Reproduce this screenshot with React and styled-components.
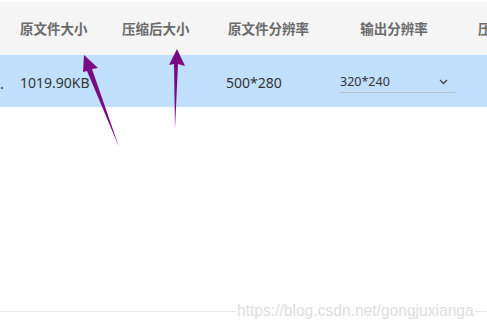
import React from "react";
import styled, { createGlobalStyle } from "styled-components";

const Global = createGlobalStyle`
  html, body { margin: 0; padding: 0; background: #fff; }
  body { width: 487px; height: 329px; overflow: hidden; }
  #root { height: 100%; }
`;

const Page = styled.div`
  position: relative;
  height: 329px;
  display: flex;
  flex-direction: column;
  padding-top: 2px;
  box-sizing: border-box;
  font-family: "Noto Sans", "Noto Sans CJK SC", sans-serif;
`;

const Grid = styled.div`
  display: grid;
  grid-template-columns: 20px 82px 106px 112px 148px 1fr;
  height: ${(p) => p.$h}px;
  background: ${(p) => p.$bg};
  align-items: center;
  white-space: nowrap;
  overflow: hidden;
`;

const HeadCell = styled.div`
  font-family: "Noto Sans CJK SC", sans-serif;
  font-size: 13.5px;
  font-weight: 700;
  color: #6a6a6a;
  text-align: ${(p) => (p.$center ? "center" : "left")};
  padding-left: ${(p) => p.$pl || 0}px;
  margin-top: -1px;
`;

const Cell = styled.div`
  font-family: "Noto Sans", "Noto Sans CJK SC", sans-serif;
  font-size: 14px;
  color: #333;
  padding-left: ${(p) => p.$pl || 0}px;
  margin-top: ${(p) => p.$mt ?? 3}px;
`;

const Select = styled.div`
  margin-left: 20px;
  width: 115px;
  height: 22px;
  box-sizing: border-box;
  border-bottom: 1px solid #b8c4ce;
  display: flex;
  align-items: center;
  justify-content: space-between;
  font-size: 12.5px;
  color: #333;
  margin-top: 2px;
`;

const Footer = styled.div`
  margin-top: auto;
  margin-bottom: 9px;
  display: flex;
  align-items: center;
  gap: 1px;
`;

const Rule = styled.div`
  height: 1px;
  background: #e6e6e6;
  flex: ${(p) => (p.$grow ? 1 : "none")};
  width: ${(p) => p.$w || 0}px;
`;

const Mark = styled.span`
  font-family: "Liberation Sans", Arial, sans-serif;
  font-size: 15.6px;
  color: #dedede;
`;

const Overlay = styled.svg`
  position: absolute;
  left: 0;
  top: 0;
  pointer-events: none;
`;

export default function App() {
  return (
    <Page>
      <Global />
      <Grid $h={53} $bg="#f5f5f5">
        <HeadCell />
        <HeadCell>原文件大小</HeadCell>
        <HeadCell $pl={20}>压缩后大小</HeadCell>
        <HeadCell $pl={20}>原文件分辨率</HeadCell>
        <HeadCell $center>输出分辨率</HeadCell>
        <HeadCell $pl={10}>压缩</HeadCell>
      </Grid>
      <Grid $h={52} $bg="#c0e0fd">
        <Cell $mt={5}>.</Cell>
        <Cell>1019.90KB</Cell>
        <Cell />
        <Cell $pl={18}>500*280</Cell>
        <Select>
          <span>320*240</span>
          <svg width="9" height="6" viewBox="0 0 9 6" style={{ marginRight: 7 }}>
            <path d="M1 1 L4.5 4.5 L8 1" fill="none" stroke="#444" strokeWidth="1.3" />
          </svg>
        </Select>
        <Cell />
      </Grid>
      <Footer>
        <Rule $w={236} />
        <Mark>https://blog.csdn.net/gongjuxianga</Mark>
        <Rule $grow />
      </Footer>
      <Overlay width="487" height="329" viewBox="0 0 487 329">
        <polygon points="84,55 98,68 92,69 119,147 87,71 83,72" fill="#7a0a84" />
        <polygon points="177,49 185,66 178,64 175,129 174,64 169,65" fill="#7a0a84" />
      </Overlay>
    </Page>
  );
}
